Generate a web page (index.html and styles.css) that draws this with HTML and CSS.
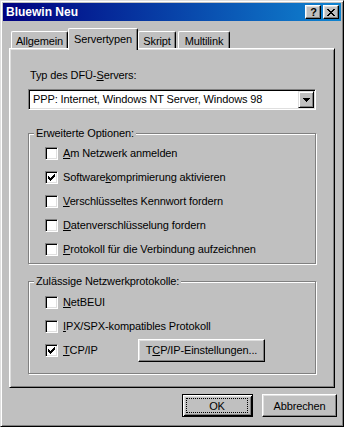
FILE: index.html
```html
<!DOCTYPE html>
<html lang="de">
<head>
<meta charset="utf-8">
<title>Bluewin Neu</title>
<link rel="stylesheet" href="styles.css">
</head>
<body>
<div class="window">
  <div class="titlebar">
    <span class="title">Bluewin Neu</span>
    <div class="title-buttons">
      <span class="tbtn help">?</span>
      <span class="tbtn close">
        <svg width="8" height="7" viewBox="0 0 8 7" shape-rendering="crispEdges"><path fill="#000" d="M0 0h2v1H0zM6 0h2v1H6zM1 1h2v1H1zM5 1h2v1H5zM2 2h4v1H2zM3 3h2v1H3zM2 4h4v1H2zM1 5h2v1H1zM5 5h2v1H5zM0 6h2v1H0zM6 6h2v1H6z"/></svg>
      </span>
    </div>
  </div>

  <div class="tabs">
    <div class="tab tab-allgemein">Allgemein</div>
    <div class="tab tab-active tab-server">Servertypen</div>
    <div class="tab tab-skript">Skript</div>
    <div class="tab tab-multi">Multilink</div>
  </div>

  <div class="panel">
    <div class="field-label">Typ des DFÜ-<u>S</u>ervers:</div>
    <div class="combo">
      <span class="combo-text">PPP: Internet, Windows NT Server, Windows 98</span>
      <span class="combo-btn">
        <svg width="7" height="4" viewBox="0 0 7 4" shape-rendering="crispEdges"><path fill="#000" d="M0 0h7v1H0zM1 1h5v1H1zM2 2h3v1H2zM3 3h1v1H3z"/></svg>
      </span>
    </div>

    <div class="group group-options">
      <div class="group-title">Erweiterte Optionen:</div>
      <div class="rows">
        <div class="row"><span class="cb"></span><span class="lbl"><u>A</u>m Netzwerk anmelden</span></div>
        <div class="row"><span class="cb checked"><svg width="7" height="7" viewBox="0 0 7 7" shape-rendering="crispEdges"><path fill="#000" d="M0 2h1v3H0zM1 3h1v3H1zM2 4h1v3H2zM3 3h1v3H3zM4 2h1v3H4zM5 1h1v3H5zM6 0h1v3H6z"/></svg></span><span class="lbl">Software<u>k</u>omprimierung aktivieren</span></div>
        <div class="row"><span class="cb"></span><span class="lbl"><u>V</u>erschlüsseltes Kennwort fordern</span></div>
        <div class="row"><span class="cb"></span><span class="lbl"><u>D</u>atenverschlüsselung fordern</span></div>
        <div class="row"><span class="cb"></span><span class="lbl"><u>P</u>rotokoll für die Verbindung aufzeichnen</span></div>
      </div>
    </div>

    <div class="group group-proto">
      <div class="group-title">Zulässige Netzwerkprotokolle:</div>
      <div class="rows">
        <div class="row"><span class="cb"></span><span class="lbl"><u>N</u>etBEUI</span></div>
        <div class="row"><span class="cb"></span><span class="lbl"><u>I</u>PX/SPX-kompatibles Protokoll</span></div>
        <div class="row"><span class="cb checked"><svg width="7" height="7" viewBox="0 0 7 7" shape-rendering="crispEdges"><path fill="#000" d="M0 2h1v3H0zM1 3h1v3H1zM2 4h1v3H2zM3 3h1v3H3zM4 2h1v3H4zM5 1h1v3H5zM6 0h1v3H6z"/></svg></span><span class="lbl lbl-tcp"><u>T</u>CP/IP</span><span class="btn btn-tcp">T<u>C</u>P/IP-Einstellungen...</span></div>
      </div>
    </div>
  </div>

  <div class="footer">
    <span class="btn btn-default btn-ok"><span class="focus">OK</span></span>
    <span class="btn btn-cancel">Abbrechen</span>
  </div>
</div>
</body>
</html>
```

FILE: styles.css
```css
* { box-sizing: border-box; }

html, body {
  margin: 0;
  padding: 0;
  background: #c0c0c0;
}

body {
  font-family: "Liberation Sans", Arial, sans-serif;
  font-size: 11px;
  line-height: 14px;
  letter-spacing: -0.12px;
  color: #000;
}

u { text-decoration: underline; text-underline-offset: 1px; }

.window {
  width: 344px;
  height: 427px;
  background: #c0c0c0;
  border: 1px solid;
  border-color: #dfdfdf #000 #000 #dfdfdf;
  box-shadow: inset 1px 1px #fff, inset -1px -1px #808080;
  padding: 2px;
  display: flex;
  flex-direction: column;
}

.titlebar {
  height: 18px;
  background: linear-gradient(90deg, #000080 0%, #1084d0 100%);
  display: flex;
  align-items: flex-start;
  justify-content: space-between;
  padding: 0 2px 0 3px;
}

.title {
  color: #fff;
  font-weight: bold;
  font-size: 12px;
  letter-spacing: 0;
  line-height: 18px;
}

.title-buttons {
  display: flex;
  gap: 2px;
  margin-top: 2px;
}

.tbtn {
  width: 16px;
  height: 14px;
  background: #c0c0c0;
  border: 1px solid;
  border-color: #fff #000 #000 #fff;
  box-shadow: inset -1px -1px #808080, inset 1px 1px #dfdfdf;
  display: flex;
  align-items: center;
  justify-content: center;
}

.help {
  font-weight: bold;
  font-size: 11px;
  line-height: 12px;
  padding-left: 1px;
}

.tabs {
  display: flex;
  align-items: flex-end;
  margin: 7px 0 0 8px;
  height: 20px;
}

.tab {
  height: 17px;
  padding-top: 2px;
  text-align: center;
  border-top: 1px solid #fff;
  border-left: 1px solid #fff;
  border-right: 1px solid #000;
  border-radius: 2px 2px 0 0;
  box-shadow: inset -1px 0 #808080;
  background: #c0c0c0;
}

.tab-allgemein { width: 57px; }
.tab-server { width: 70px; }
.tab-skript { width: 38px; }
.tab-multi { width: 52px; margin-left: 2px; }

.tab-active {
  height: 22px;
  padding-top: 3px;
  margin-bottom: -2px;
  position: relative;
  z-index: 1;
}

.panel {
  height: 340px;
  margin: 0 6px;
  border: 1px solid;
  border-color: #fff #000 #000 #fff;
  box-shadow: inset 1px 1px #dfdfdf, inset -1px -1px #808080;
  padding: 19px 18px 0 18px;
  display: flex;
  flex-direction: column;
}

.field-label {
  margin-left: 2px;
  height: 14px;
}

.combo {
  margin-top: 7px;
  height: 21px;
  background: #fff;
  border: 1px solid;
  border-color: #808080 #fff #fff #808080;
  box-shadow: inset 1px 1px #000, inset -1px -1px #dfdfdf;
  padding: 1px;
  display: flex;
  align-items: stretch;
}

.combo-text {
  flex: 1;
  padding-left: 3px;
  line-height: 17px;
}

.combo-btn {
  width: 16px;
  background: #c0c0c0;
  border: 1px solid;
  border-color: #dfdfdf #000 #000 #dfdfdf;
  box-shadow: inset 1px 1px #fff, inset -1px -1px #808080;
  display: flex;
  align-items: center;
  justify-content: center;
}

.group {
  border: 1px solid #808080;
  box-shadow: inset 1px 1px #fff, 1px 1px #fff;
  display: flex;
  flex-direction: column;
}

.group-options {
  margin-top: 23px;
  padding-bottom: 2px;
}

.group-proto {
  margin-top: 17px;
  padding-bottom: 11px;
}

.group-title {
  align-self: flex-start;
  margin: -8px 0 0 5px;
  padding: 0 2px;
  background: #c0c0c0;
  height: 14px;
}

.rows {
  display: flex;
  flex-direction: column;
  padding-left: 16px;
}

.group-options .rows { padding-top: 1px; }
.group-proto .rows { padding-top: 2px; }

.row {
  height: 24px;
  display: flex;
  align-items: center;
}

.cb {
  width: 13px;
  height: 13px;
  background: #fff;
  border: 1px solid;
  border-color: #808080 #fff #fff #808080;
  box-shadow: inset 1px 1px #000, inset -1px -1px #dfdfdf;
  margin-right: 5px;
  display: flex;
  align-items: center;
  justify-content: center;
  flex: none;
}

.lbl-tcp { width: 75px; }

.btn {
  height: 23px;
  background: #c0c0c0;
  border: 1px solid;
  border-color: #fff #000 #000 #fff;
  box-shadow: inset -1px -1px #808080, inset 1px 1px #dfdfdf;
  display: flex;
  align-items: center;
  justify-content: center;
}

.btn-tcp { width: 127px; }

.footer {
  margin-top: 6px;
  display: flex;
  justify-content: flex-end;
  gap: 9px;
  padding-right: 4px;
}

.btn-ok { width: 71px; }
.btn-cancel { width: 75px; }

.btn-default {
  border: 1px solid #000;
  box-shadow: inset 1px 1px #fff, inset -1px -1px #000, inset 2px 2px #dfdfdf, inset -2px -2px #808080;
  padding: 3px 4px 3px 3px;
  align-items: stretch;
}

.focus {
  flex: 1;
  border: 1px dotted #000;
  display: flex;
  align-items: center;
  justify-content: center;
}
```
